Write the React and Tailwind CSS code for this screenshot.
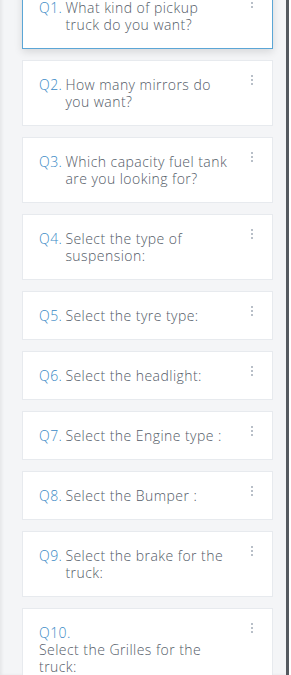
import React from "react";

const qs = [
  { n: "Q1.", t: ["What kind of pickup", "truck do you want?"], active: true },
  { n: "Q2.", t: ["How many mirrors do", "you want?"] },
  { n: "Q3.", t: ["Which capacity fuel tank", "are you looking for?"] },
  { n: "Q4.", t: ["Select the type of", "suspension:"] },
  { n: "Q5.", t: ["Select the tyre type:"] },
  { n: "Q6.", t: ["Select the headlight:"] },
  { n: "Q7.", t: ["Select the Engine type :"] },
  { n: "Q8.", t: ["Select the Bumper :"] },
  { n: "Q9.", t: ["Select the brake for the", "truck:"] },
  { n: "Q10.", t: ["Select the Grilles for the", "truck:"], block: true },
];

function Dots() {
  return (
    <div className="flex flex-col gap-[2px] shrink-0 mt-[-1px]">
      <span className="block w-[2px] h-[2px] bg-[#b8bfc8]" />
      <span className="block w-[2px] h-[2px] bg-[#b8bfc8]" />
      <span className="block w-[2px] h-[2px] bg-[#b8bfc8]" />
    </div>
  );
}

export default function App() {
  return (
    <div
      className="w-[291px] h-[675px] overflow-hidden flex bg-[#f4f5f7]"
      style={{ fontFamily: '"Open Sans", sans-serif' }}
    >
      <div className="flex-1 flex flex-col gap-[11px] pl-[22px] pr-[13px] mt-[-17px] shadow-[inset_2px_0_3px_rgba(0,0,0,0.06)]">
        {qs.map((q) => (
          <div
            key={q.n}
            className={
              "shrink-0 flex justify-between pl-[16px] pr-[19px] py-[15px] bg-white border " +
              (q.active
                ? "border-[#5ba6d6] shadow-[0_3px_8px_rgba(0,0,0,0.12)]"
                : "border-[#e7eaee]")
            }
          >
            {q.block ? (
              <div className="text-[14px] leading-[17px] tracking-[0.45px] font-light text-[#535b67] whitespace-nowrap">
                <div className="text-[#3a8ac6]">{q.n}</div>
                {q.t.map((l) => (
                  <div key={l}>{l}</div>
                ))}
              </div>
            ) : (
              <div className="flex text-[14px] leading-[17px] tracking-[0.45px] font-light text-[#535b67] whitespace-nowrap">
                <span className="text-[#3a8ac6] shrink-0 mr-[3px]">{q.n}</span>
                <div>
                  {q.t.map((l) => (
                    <div key={l}>{l}</div>
                  ))}
                </div>
              </div>
            )}
            <Dots />
          </div>
        ))}
      </div>
      <div className="w-[3px] bg-[#555a60]" />
      <div className="w-[2px] bg-white" />
    </div>
  );
}
